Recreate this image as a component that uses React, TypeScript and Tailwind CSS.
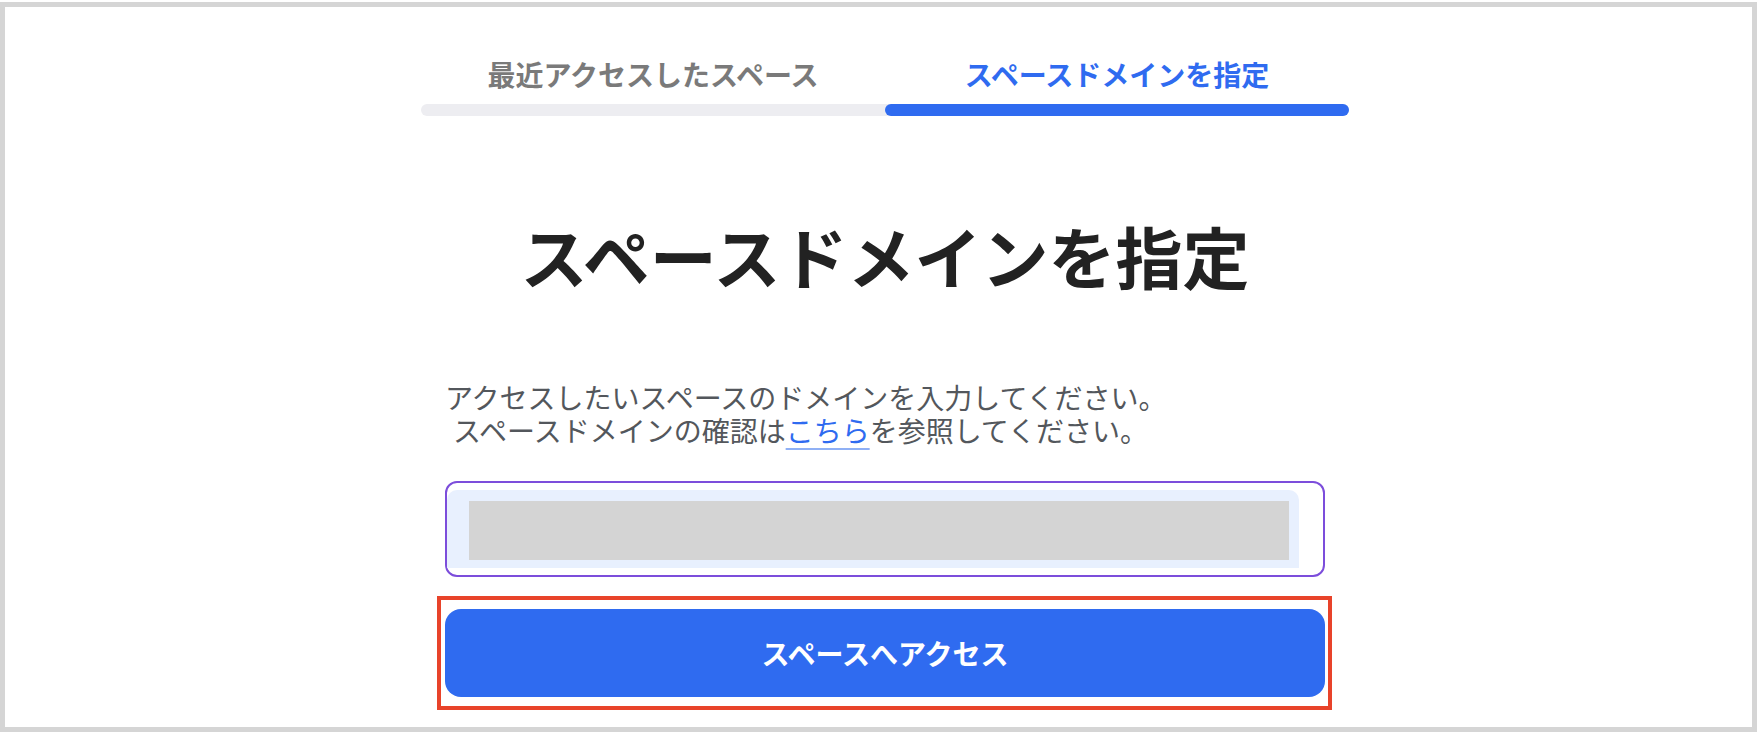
export default function App() {
  return (
    <div className="w-[1758px] h-[732px] bg-white pt-[2px] pr-[1px] font-['Noto_Sans_CJK_JP','Noto_Sans',sans-serif]">
      <div className="h-[730px] border-[5px] border-[#d5d5d5] flex flex-col items-center pl-[13px]">
        <div className="w-[928px] mt-[50px]">
          <div className="flex">
            <div className="flex-1 text-center text-[28px] leading-[34px] font-bold text-[#7a7a7a]">
              最近アクセスしたスペース
            </div>
            <div className="flex-1 text-center text-[28px] leading-[34px] font-bold text-[#2f6bf0]">
              スペースドメインを指定
            </div>
          </div>
          <div className="mt-[13px] h-[12px] rounded-full bg-[#ededf1] flex justify-end">
            <div className="w-1/2 h-full rounded-full bg-[#2f6bf0]" />
          </div>
        </div>

        <h1 className="mt-[100px] text-[67px] leading-[78px] font-bold text-[#222222]">
          スペースドメインを指定
        </h1>

        <div className="w-[880px] mt-[87px]">
          <p className="text-[28px] leading-[33px] text-[#53575c]">
            <span className="block">アクセスしたいスペースのドメインを入力してください。</span>
            <span className="block pl-[8px]">
              スペースドメインの確認は
              <a
                href="#"
                className="text-[#2f6bf0] underline decoration-[#8fb0f5] decoration-2 underline-offset-[6px]"
              >
                こちら
              </a>
              を参照してください。
            </span>
          </p>

          <div className="mt-[34px] h-[96px] rounded-[12px] border-2 border-[#7c4ddb] flex pt-[7px] pb-[7px] pr-[24px]">
            <div className="flex-1 rounded-t-[10px] bg-[#e8f0fe] pl-[22px] pr-[10px] pt-[11px] pb-[8px]">
              <div className="h-full bg-[#d4d4d4]" />
            </div>
          </div>

          <div className="relative mt-[32px]">
            <button className="w-full h-[88px] rounded-[16px] bg-[#2f6bf0] text-white text-[28px] font-bold">
              スペースへアクセス
            </button>
            <div className="absolute -left-[8px] -right-[7px] -top-[13px] -bottom-[13px] border-4 border-[#e8432a] pointer-events-none" />
          </div>
        </div>
      </div>
    </div>
  );
}
